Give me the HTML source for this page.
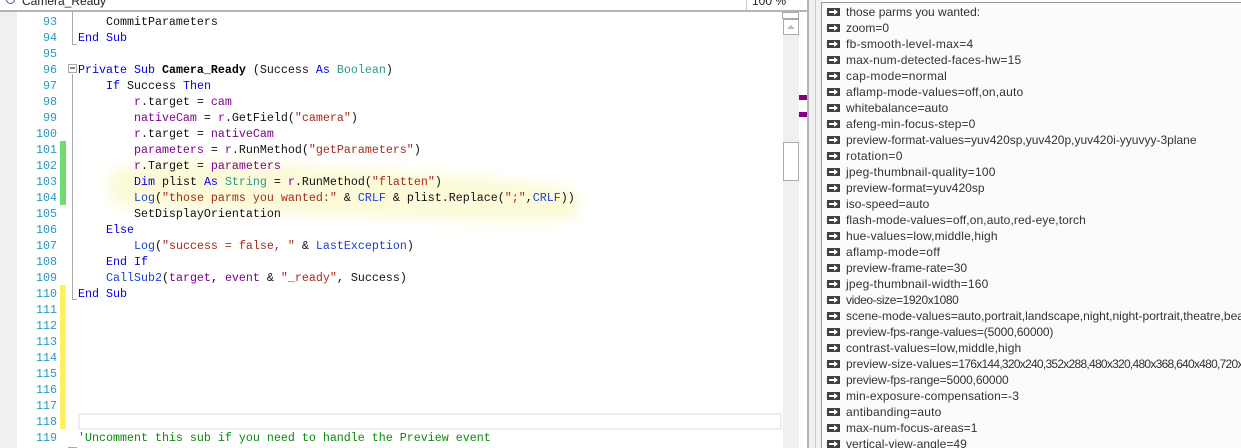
<!DOCTYPE html>
<html><head><meta charset="utf-8"><style>
html,body{margin:0;padding:0;background:#fff}
#p{position:relative;width:1241px;height:448px;overflow:hidden;background:#fff;font-family:"Liberation Mono",monospace;font-size:11.67px}
.a{position:absolute}
.l,.n,.r{position:absolute;height:16px;line-height:16px;white-space:pre}
.l,.n{margin-top:1px}
.n{left:20px;width:37px;text-align:right;color:#2b97c0}
.l{left:78px;color:#111}
.k{color:#0000e6}.t{color:#2a9a8a}.s{color:#a82a1a}.v{color:#800090}.b{font-weight:bold;color:#000}.m{color:#1a3fd8}.c{color:#0a8a0a}
.r{left:846px;font-family:"Liberation Sans",sans-serif;font-size:12px;color:#333}
.i{position:absolute;left:827px;width:13px;height:8px}
</style></head><body><div id="p">
<div class="a" style="left:0;top:12px;width:17px;height:436px;background:#f0f0f0"></div>
<div class="a" style="left:0;top:10px;width:808px;height:2px;background:#b4b4b4"></div>
<div class="a" style="left:22px;top:-6px;font:12px/14px 'Liberation Sans',sans-serif;color:#222">Camera_Ready</div>
<div class="a" style="left:6px;top:-5px;width:7px;height:7px;border:1px solid #70408a;border-radius:50%"></div>
<div class="a" style="left:746px;top:0;width:1px;height:10px;background:#ccc"></div>
<div class="a" style="left:752px;top:-6px;font:12px/14px 'Liberation Sans',sans-serif;color:#222">100 %</div>
<svg class="a" style="left:80px;top:140px" width="530" height="100"><defs><filter id="f" x="-10%" y="-40%" width="120%" height="180%"><feGaussianBlur stdDeviation="6"/></filter></defs><path d="M34 30 C70 20 130 20 190 24 C300 30 420 36 494 50 C502 62 502 76 490 80 C400 82 300 78 220 74 C150 72 80 70 34 64 C26 52 26 40 34 30Z" fill="#fcfad8" filter="url(#f)"/></svg>
<div class="a" style="left:60px;top:141px;width:6px;height:64px;background:#6fdc6f"></div>
<div class="a" style="left:60px;top:285px;width:6px;height:144px;background:#fff063"></div>
<div class="a" style="left:72px;top:12px;width:1px;height:33px;background:#aaa"></div>
<div class="a" style="left:72px;top:44px;width:5px;height:1px;background:#aaa"></div>
<div class="a" style="left:68px;top:64px;width:7px;height:7px;border:1px solid #aaa;background:#fff"></div>
<div class="a" style="left:70px;top:67px;width:5px;height:2px;background:#888"></div>
<div class="a" style="left:72px;top:74px;width:1px;height:226px;background:#aaa"></div>
<div class="a" style="left:72px;top:299px;width:5px;height:1px;background:#aaa"></div>
<div class="a" style="left:68px;top:447px;width:9px;height:1px;background:#aaa"></div>
<div class="a" style="left:78px;top:413px;width:700px;height:13px;border:2px solid #eee"></div>
<div class="n" style="top:13px">93</div><div class="n" style="top:29px">94</div><div class="n" style="top:45px">95</div><div class="n" style="top:61px">96</div><div class="n" style="top:77px">97</div><div class="n" style="top:93px">98</div><div class="n" style="top:109px">99</div><div class="n" style="top:125px">100</div><div class="n" style="top:141px">101</div><div class="n" style="top:157px">102</div><div class="n" style="top:173px">103</div><div class="n" style="top:189px">104</div><div class="n" style="top:205px">105</div><div class="n" style="top:221px">106</div><div class="n" style="top:237px">107</div><div class="n" style="top:253px">108</div><div class="n" style="top:269px">109</div><div class="n" style="top:285px">110</div><div class="n" style="top:301px">111</div><div class="n" style="top:317px">112</div><div class="n" style="top:333px">113</div><div class="n" style="top:349px">114</div><div class="n" style="top:365px">115</div><div class="n" style="top:381px">116</div><div class="n" style="top:397px">117</div><div class="n" style="top:413px">118</div><div class="n" style="top:429px">119</div>
<div class="l" style="top:13px">    CommitParameters</div>
<div class="l" style="top:29px"><span class="k">End Sub</span></div>
<div class="l" style="top:61px"><span class="k">Private Sub</span> <span class="b">Camera_Ready</span> (Success <span class="k">As</span> <span class="t">Boolean</span>)</div>
<div class="l" style="top:77px">    <span class="k">If</span> Success <span class="k">Then</span></div>
<div class="l" style="top:93px">        <span class="v">r</span>.target = <span class="v">cam</span></div>
<div class="l" style="top:109px">        <span class="v">nativeCam</span> = <span class="v">r</span>.GetField(<span class="s">"camera"</span>)</div>
<div class="l" style="top:125px">        <span class="v">r</span>.target = <span class="v">nativeCam</span></div>
<div class="l" style="top:141px">        <span class="v">parameters</span> = <span class="v">r</span>.RunMethod(<span class="s">"getParameters"</span>)</div>
<div class="l" style="top:157px">        <span class="v">r</span>.Target = <span class="v">parameters</span></div>
<div class="l" style="top:173px">        <span class="k">Dim</span> plist <span class="k">As</span> <span class="t">String</span> = <span class="v">r</span>.RunMethod(<span class="s">"flatten"</span>)</div>
<div class="l" style="top:189px">        <span class="m">Log</span>(<span class="s">"those parms you wanted:"</span> &amp; <span class="m">CRLF</span> &amp; plist.Replace(<span class="s">";"</span>,<span class="m">CRLF</span>))</div>
<div class="l" style="top:205px">        SetDisplayOrientation</div>
<div class="l" style="top:221px">    <span class="k">Else</span></div>
<div class="l" style="top:237px">        <span class="m">Log</span>(<span class="s">"success = false, "</span> &amp; <span class="m">LastException</span>)</div>
<div class="l" style="top:253px">    <span class="k">End If</span></div>
<div class="l" style="top:269px">    <span class="m">CallSub2</span>(<span class="v">target</span>, <span class="v">event</span> &amp; <span class="s">"_ready"</span>, Success)</div>
<div class="l" style="top:285px"><span class="k">End Sub</span></div>
<div class="l" style="top:429px"><span class="c">'Uncomment this sub if you need to handle the Preview event</span></div>
<div class="a" style="left:783px;top:12px;width:16px;height:436px;background:#f0f0f0"></div>
<div class="a" style="left:782px;top:12px;width:15px;height:5px;border:1px solid #aaa;background:#fff"></div>
<div class="a" style="left:783px;top:19px;width:14px;height:14px;border:1px solid #aaa;background:#fff"></div>
<div class="a" style="left:787px;top:25px;width:0;height:0;border:4px solid transparent;border-top:0;border-bottom:4px solid #bbb"></div>
<div class="a" style="left:783px;top:142px;width:14px;height:37px;border:1px solid #aaa;background:#fff"></div>
<div class="a" style="left:799px;top:95px;width:8px;height:5px;background:#800080"></div>
<div class="a" style="left:799px;top:112px;width:8px;height:5px;background:#800080"></div>
<div class="a" style="left:807px;top:0;width:2px;height:448px;background:#b4b4b4"></div>
<div class="a" style="left:809px;top:0;width:13px;height:448px;background:#f0f0f0"></div>
<div class="a" style="left:815px;top:0;width:1px;height:448px;background:#ccc"></div>
<div class="a" style="left:821px;top:2px;width:1px;height:446px;background:#999"></div>
<div class="a" style="left:821px;top:2px;width:420px;height:1px;background:#999"></div>
<div class="a" style="left:822px;top:3px;width:419px;height:445px;background:#fbfbfb"></div>
<svg width="0" height="0" style="position:absolute"><defs><g id="ar"><rect width="13" height="8" fill="#404040"/><path d="M2 3H7V1L11 4L7 7V5H2Z" fill="#fff"/></g></defs></svg>
<svg class="i" style="top:8px"><use href="#ar"/></svg><div class="r" style="top:4px">those parms you wanted:</div>
<svg class="i" style="top:24px"><use href="#ar"/></svg><div class="r" style="top:20px">zoom=0</div>
<svg class="i" style="top:40px"><use href="#ar"/></svg><div class="r" style="top:36px;letter-spacing:.24px">fb-smooth-level-max=4</div>
<svg class="i" style="top:56px"><use href="#ar"/></svg><div class="r" style="top:52px;letter-spacing:.1px">max-num-detected-faces-hw=15</div>
<svg class="i" style="top:72px"><use href="#ar"/></svg><div class="r" style="top:68px;letter-spacing:.27px">cap-mode=normal</div>
<svg class="i" style="top:88px"><use href="#ar"/></svg><div class="r" style="top:84px;letter-spacing:.17px">aflamp-mode-values=off,on,auto</div>
<svg class="i" style="top:104px"><use href="#ar"/></svg><div class="r" style="top:100px;letter-spacing:.12px">whitebalance=auto</div>
<svg class="i" style="top:120px"><use href="#ar"/></svg><div class="r" style="top:116px;letter-spacing:.14px">afeng-min-focus-step=0</div>
<svg class="i" style="top:136px"><use href="#ar"/></svg><div class="r" style="top:132px">preview-format-values=yuv420sp,yuv420p,yuv420i-yyuvyy-3plane</div>
<svg class="i" style="top:152px"><use href="#ar"/></svg><div class="r" style="top:148px;letter-spacing:.3px">rotation=0</div>
<svg class="i" style="top:168px"><use href="#ar"/></svg><div class="r" style="top:164px;letter-spacing:.2px">jpeg-thumbnail-quality=100</div>
<svg class="i" style="top:184px"><use href="#ar"/></svg><div class="r" style="top:180px;letter-spacing:.04px">preview-format=yuv420sp</div>
<svg class="i" style="top:200px"><use href="#ar"/></svg><div class="r" style="top:196px;letter-spacing:.07px">iso-speed=auto</div>
<svg class="i" style="top:216px"><use href="#ar"/></svg><div class="r" style="top:212px;letter-spacing:.1px">flash-mode-values=off,on,auto,red-eye,torch</div>
<svg class="i" style="top:232px"><use href="#ar"/></svg><div class="r" style="top:228px;letter-spacing:.15px">hue-values=low,middle,high</div>
<svg class="i" style="top:248px"><use href="#ar"/></svg><div class="r" style="top:244px;letter-spacing:.27px">aflamp-mode=off</div>
<svg class="i" style="top:264px"><use href="#ar"/></svg><div class="r" style="top:260px">preview-frame-rate=30</div>
<svg class="i" style="top:280px"><use href="#ar"/></svg><div class="r" style="top:276px;letter-spacing:.2px">jpeg-thumbnail-width=160</div>
<svg class="i" style="top:296px"><use href="#ar"/></svg><div class="r" style="top:292px;letter-spacing:-.4px">video-size=1920x1080</div>
<svg class="i" style="top:312px"><use href="#ar"/></svg><div class="r" style="top:308px">scene-mode-values=auto,portrait,landscape,night,night-portrait,theatre,beach</div>
<svg class="i" style="top:328px"><use href="#ar"/></svg><div class="r" style="top:324px;letter-spacing:-.16px">preview-fps-range-values=(5000,60000)</div>
<svg class="i" style="top:344px"><use href="#ar"/></svg><div class="r" style="top:340px;letter-spacing:.16px">contrast-values=low,middle,high</div>
<svg class="i" style="top:360px"><use href="#ar"/></svg><div class="r" style="top:356px">preview-size-values=<span style="letter-spacing:-.73px">176x144,320x240,352x288,480x320,480x368,640x480,720x480</span></div>
<svg class="i" style="top:376px"><use href="#ar"/></svg><div class="r" style="top:372px;letter-spacing:-.14px">preview-fps-range=5000,60000</div>
<svg class="i" style="top:392px"><use href="#ar"/></svg><div class="r" style="top:388px;letter-spacing:.14px">min-exposure-compensation=-3</div>
<svg class="i" style="top:408px"><use href="#ar"/></svg><div class="r" style="top:404px;letter-spacing:.19px">antibanding=auto</div>
<svg class="i" style="top:424px"><use href="#ar"/></svg><div class="r" style="top:420px;letter-spacing:.05px">max-num-focus-areas=1</div>
<svg class="i" style="top:440px"><use href="#ar"/></svg><div class="r" style="top:436px;letter-spacing:.05px">vertical-view-angle=49</div>
</div></body></html>
